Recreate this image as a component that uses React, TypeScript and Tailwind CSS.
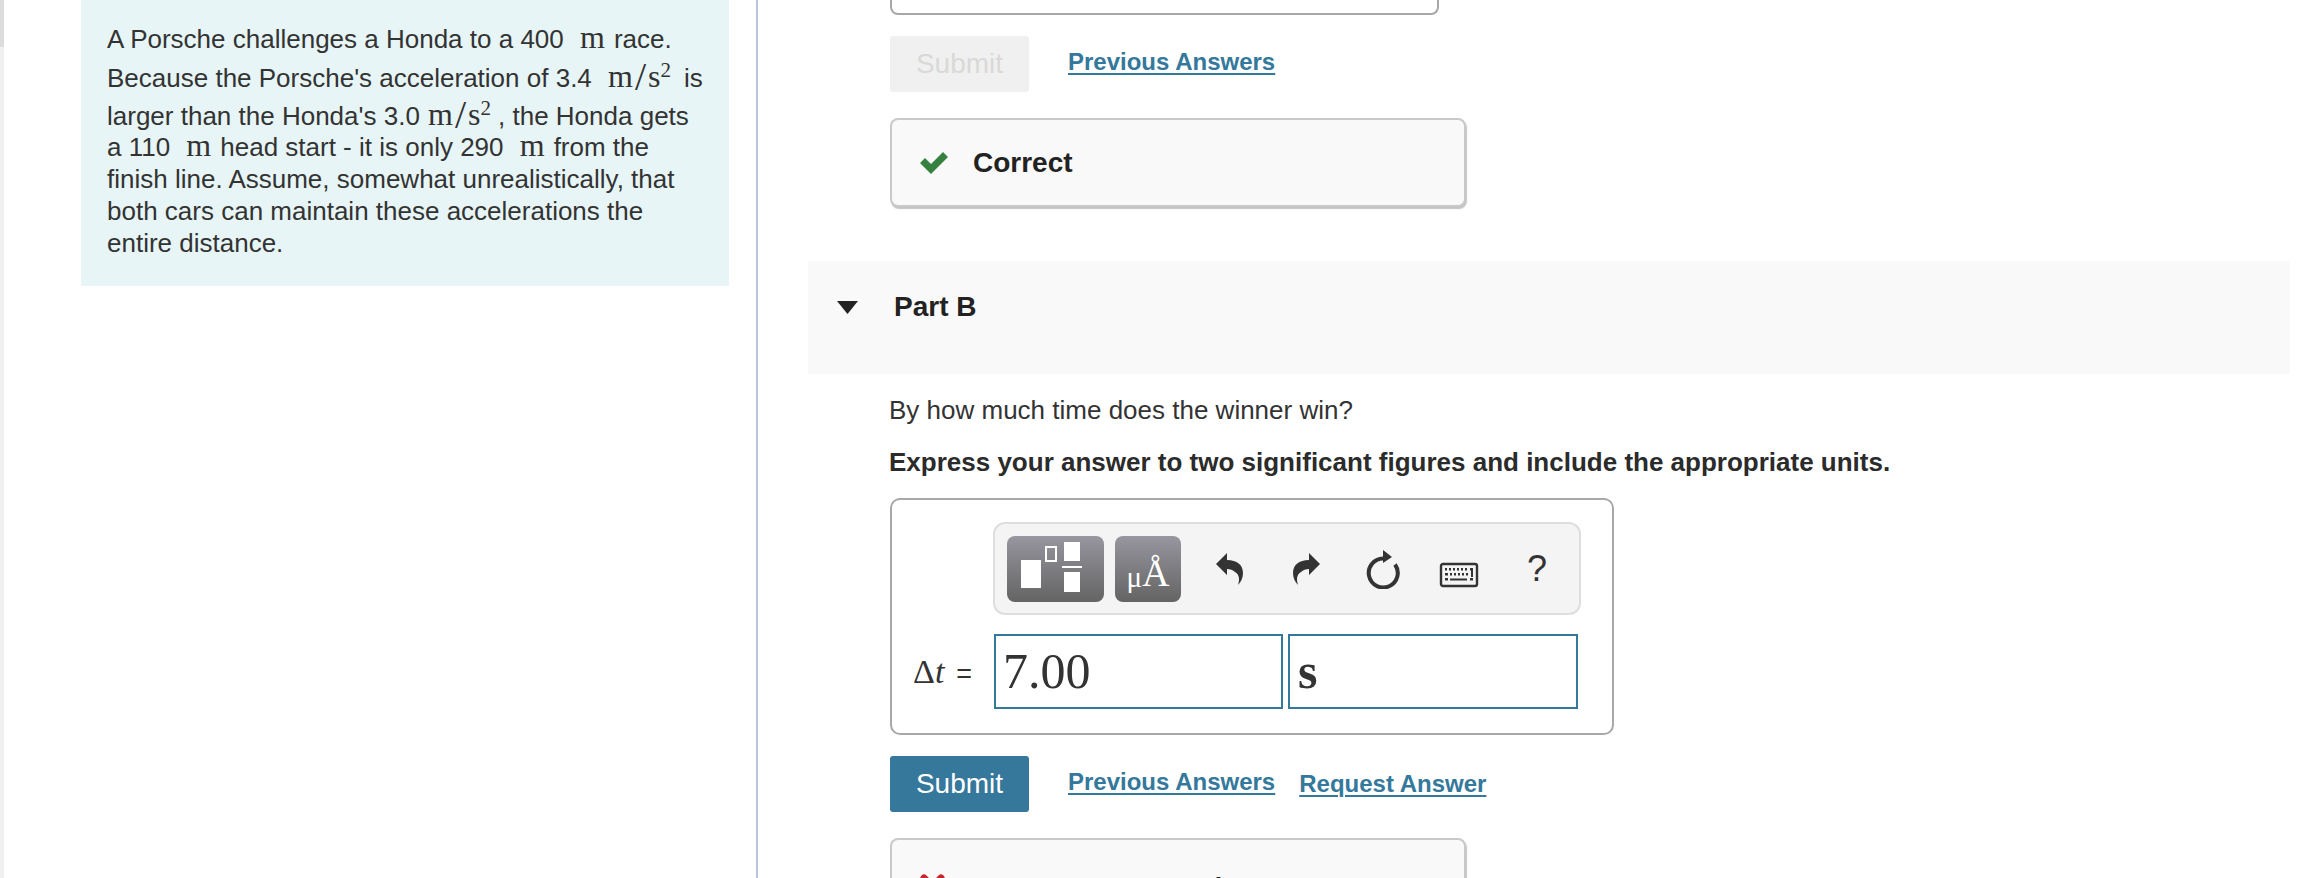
const Unit = ({ children }: { children: React.ReactNode }) => (
      <span className="font-['Liberation_Serif',serif] text-[32px] leading-none text-[#333] mx-[9px]">{children}</span>
)

const MS2 = ({ tight }: { tight?: boolean }) => (
      <span className={`font-['Liberation_Serif',serif] text-[32px] leading-none text-[#333] ${tight ? 'ml-[5px] mr-[7px]' : 'ml-[9px] mr-[13px]'}`}>
            m<span className="relative top-[3px] mx-[2px] text-[40px] leading-none">/</span>s<sup className="text-[21px]">2</sup>
      </span>
)

const Link = ({ children, className = "" }: { children: React.ReactNode; className?: string }) => (
      <a className={`text-[24px] font-bold leading-[26px] text-[#34789b] underline underline-offset-[3px] decoration-2 ${className}`}>{children}</a>
)

export default function App() {
      return (
            <div className="flex h-[878px] w-[2304px] overflow-hidden bg-white font-['Liberation_Sans',Arial,sans-serif] text-[26px] text-[#333]">
                  {/* left rail */}
                  <div className="flex w-[4px] flex-col">
                        <div className="h-[47px] bg-[#dcdcdc]"></div>
                        <div className="flex-1 bg-[#f0f0f0]"></div>
                  </div>

                  {/* problem statement */}
                  <div className="w-[754px] border-r-2 border-r-[#b9c5dd] pl-[77px]">
                        <div className="h-[286px] w-[648px] bg-[#e7f5f6] pl-[26px] pt-[23px] whitespace-nowrap">
                              <div className="flex h-[32px] items-center">
                                    <p>A Porsche challenges a Honda to a 400 <Unit>m</Unit>race.</p>
                              </div>
                              <div className="flex h-[42px] items-center">
                                    <p>Because the Porsche's acceleration of 3.4 <MS2 />is</p>
                              </div>
                              <div className="flex h-[34px] items-center">
                                    <p>larger than the Honda's 3.0 <span className="-ml-[4px]"><MS2 tight /></span>, the Honda gets</p>
                              </div>
                              <div className="flex h-[32px] items-center">
                                    <p>a 110 <Unit>m</Unit>head start - it is only 290 <Unit>m</Unit>from the</p>
                              </div>
                              <p className="leading-[32px]">finish line. Assume, somewhat unrealistically, that</p>
                              <p className="leading-[32px]">both cars can maintain these accelerations the</p>
                              <p className="leading-[32px]">entire distance.</p>
                        </div>
                  </div>

                  {/* question column */}
                  <div className="flex-1 pl-[50px] pr-[14px]">
                        <div className="ml-[82px]">
                              <div className="h-[15px] w-[549px] rounded-b-[8px] border-2 border-t-0 border-[#a8a8a8]"></div>
                              <div className="mt-[21px] flex items-start">
                                    <button className="h-[56px] w-[139px] rounded-[3px] bg-[#f0f0f0] text-[28px] text-[#d9d9d9]">Submit</button>
                                    <Link className="ml-[39px] mt-[13px]">Previous Answers</Link>
                              </div>
                              <div className="mt-[26px] flex h-[89px] w-[576px] items-center rounded-[8px] border-2 border-[#c9c9c9] bg-[#f9f9f9] pl-[28px] shadow-[1px_2px_1px_#c4c4c4]">
                                    <svg viewBox="0 0 28 22" className="h-[22px] w-[28px]" fill="#36813f">
                                          <path d="M0 11 L5 6 L11 12 L23 0 L28 5 L11 22 Z" />
                                    </svg>
                                    <span className="ml-[25px] text-[28px] font-bold text-[#222]">Correct</span>
                              </div>
                        </div>

                        <div className="mt-[54px] flex h-[113px] items-center bg-[#f9f9f9] pb-[21px]">
                              <svg viewBox="0 0 21 13" className="ml-[29px] h-[13px] w-[21px]" fill="#222">
                                    <path d="M0 0 H21 L10.5 13 Z" />
                              </svg>
                              <span className="ml-[36px] text-[28px] font-bold text-[#222]">Part B</span>
                        </div>

                        <div className="ml-[81px]">
                              <p className="mt-[20px] leading-[32px]">By how much time does the winner win?</p>
                              <p className="mt-[20px] font-bold leading-[32px] text-[#2b2b2b]">Express your answer to two significant figures and include the appropriate units.</p>

                              {/* answer box */}
                              <div className="mt-[20px] ml-[1px] h-[237px] w-[724px] rounded-[10px] border-2 border-[#a8a8a8] pt-[22px]">
                                    <div className="ml-[101px] flex h-[93px] w-[588px] items-center rounded-[12px] border-2 border-[#dedede] bg-[#f4f4f4] pl-[12px]">
                                          <button className="flex h-[66px] w-[97px] shrink-0 items-center justify-center rounded-[8px] bg-gradient-to-b from-[#98969f] to-[#646464]">
                                                <svg viewBox="0 0 97 66" className="h-[66px] w-[97px]" fill="#fff">
                                                      <rect x="14" y="24" width="20" height="28" />
                                                      <rect x="39" y="11" width="10" height="14" fill="none" stroke="#fff" strokeWidth="2" />
                                                      <rect x="57" y="6" width="16" height="19" />
                                                      <rect x="55" y="30" width="20" height="2" />
                                                      <rect x="57" y="36" width="16" height="20" />
                                                </svg>
                                          </button>
                                          <button className="ml-[11px] flex h-[66px] w-[66px] shrink-0 items-end justify-center rounded-[8px] bg-gradient-to-b from-[#98969f] to-[#646464] pb-[10px] font-['Liberation_Serif',serif] leading-none text-white">
                                                <span className="text-[29px]">μ</span>
                                                <span className="text-[38px]">Å</span>
                                          </button>
                                          {/* undo */}
                                          <svg viewBox="0 0 29 34" className="ml-[34px] h-[34px] w-[29px] shrink-0" fill="#333">
                                                <path d="M1 12 L12 1 V8 C22 8 28 13 28 21 C28 26 26 30 23 33 C25 27 24 22 20 20 C18 18 15 17 12 17 V23 Z" />
                                          </svg>
                                          {/* redo */}
                                          <svg viewBox="0 0 29 34" className="ml-[48px] h-[34px] w-[29px] shrink-0" fill="#333">
                                                <path d="M28 12 L17 1 V8 C7 8 1 13 1 21 C1 26 3 30 6 33 C4 27 5 22 9 20 C11 18 14 17 17 17 V23 Z" />
                                          </svg>
                                          {/* reset */}
                                          <svg viewBox="0 0 36 40" className="ml-[44px] h-[40px] w-[36px] shrink-0" fill="none" stroke="#333" strokeWidth="4">
                                                <path d="M18 9.5 A14.5 14.5 0 1 0 30 15.5" />
                                                <path d="M18 1 L27 8 L18 14 Z" fill="#333" stroke="none" />
                                          </svg>
                                          {/* keyboard */}
                                          <svg viewBox="0 0 40 26" className="ml-[38px] mt-[13px] h-[26px] w-[40px] shrink-0" fill="#333">
                                                <rect x="2" y="2" width="36" height="22" rx="2" fill="none" stroke="#333" strokeWidth="2.4" />
                                                <rect x="6" y="6" width="2" height="2.5" />
                                                <rect x="10" y="6" width="2" height="2.5" />
                                                <rect x="14" y="6" width="2" height="2.5" />
                                                <rect x="18" y="6" width="2" height="2.5" />
                                                <rect x="22" y="6" width="2" height="2.5" />
                                                <rect x="26" y="6" width="2" height="2.5" />
                                                <rect x="31" y="6" width="3" height="2.5" />
                                                <rect x="6" y="11" width="3" height="2.5" />
                                                <rect x="11" y="11" width="2" height="2.5" />
                                                <rect x="15" y="11" width="2" height="2.5" />
                                                <rect x="19" y="11" width="2" height="2.5" />
                                                <rect x="23" y="11" width="2" height="2.5" />
                                                <rect x="27" y="11" width="2" height="2.5" />
                                                <rect x="32" y="8" width="2" height="7" />
                                                <rect x="6" y="16" width="3" height="2.5" />
                                                <rect x="11" y="16.5" width="17" height="2" />
                                                <rect x="31" y="16" width="3" height="2.5" />
                                          </svg>
                                          <span className="ml-[48px] text-[36px] leading-none text-[#333]">?</span>
                                    </div>
                                    <div className="mt-[19px] flex h-[75px] items-stretch">
                                          <div className="flex w-[102px] shrink-0 items-center pl-[21px]">
                                                <span className="font-['Liberation_Serif',serif] text-[34px] leading-none">Δ<i>t</i></span>
                                                <span className="ml-[12px] mt-[6px] text-[27px] leading-none">=</span>
                                          </div>
                                          <div className="w-[289px] border-2 border-[#34789b] pl-[7px] font-['Liberation_Serif',serif] text-[50px] leading-[70px]">7.00</div>
                                          <div className="ml-[5px] w-[290px] border-2 border-[#34789b] pl-[8px] pt-[2px] font-['Liberation_Serif',serif] text-[50px] font-bold leading-[66px]">s</div>
                                    </div>
                              </div>

                              <div className="mt-[21px] ml-[1px] flex items-start">
                                    <button className="h-[56px] w-[139px] rounded-[3px] bg-[#36789b] text-[28px] text-white">Submit</button>
                                    <Link className="ml-[39px] mt-[13px]">Previous Answers</Link>
                                    <Link className="ml-[24px] mt-[15px]">Request Answer</Link>
                              </div>

                              <div className="mt-[26px] ml-[1px] flex h-[89px] w-[576px] items-start rounded-[8px] border-2 border-[#c9c9c9] bg-[#f9f9f9] pl-[28px] pt-[32px] shadow-[1px_2px_1px_#c4c4c4]">
                                    <svg viewBox="0 0 26 26" className="mt-[2px] h-[26px] w-[26px] shrink-0" fill="none" stroke="#c6262e" strokeWidth="7" strokeLinecap="round">
                                          <path d="M4 4 L21 21 M21 4 L4 21" />
                                    </svg>
                                    <span className="ml-[30px] text-[28px] font-bold leading-[32px] text-[#222]">Incorrect; Try Again</span>
                              </div>
                        </div>
                  </div>
            </div>
      )
}
